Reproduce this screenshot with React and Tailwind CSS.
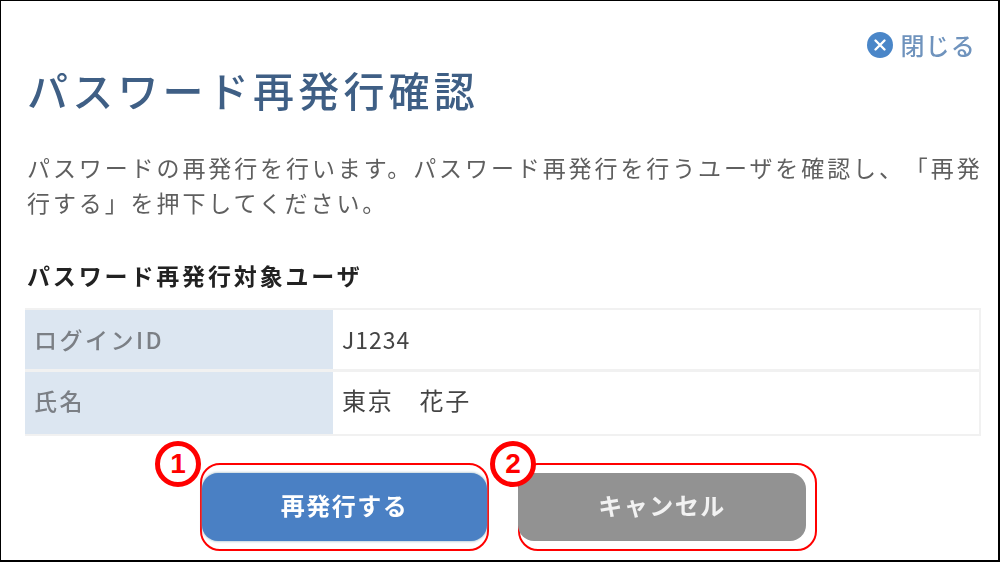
import React from 'react';

const jp = { fontFamily: '"Noto Sans CJK JP", "Noto Sans", sans-serif' };

const rows = [
  { label: 'ログインID', value: 'J1234', rowClass: 'h-[62px] border-b-[3px] border-[#f1f1f1]', valueClass: 'text-[23px] tracking-[1px]', pad: '' },
  { label: '氏名', value: '東京　花子', rowClass: 'h-[62px]', valueClass: 'text-[24px] tracking-[1.8px]', pad: 'pb-[6px]' },
];

const Badge = ({ n, className }) => (
  <div className={`absolute -top-[24px] w-[46px] h-[46px] rounded-full border-[5px] border-[#ff0000] bg-white flex items-center justify-center text-[28px] font-bold text-[#ff0000] leading-none ${className}`} style={{ fontFamily: '"Liberation Sans", sans-serif' }}>
    {n}
  </div>
);

const App = () => {
  return (
    <div className="w-[1000px] h-[562px] bg-white border-t border-l border-r-2 border-b-2 border-black overflow-hidden text-[#555]" style={jp}>
      {/* 閉じる */}
      <div className="flex justify-end items-center gap-[7px] pt-[29px] pr-[22px] h-[59px]">
        <svg width="26" height="26" viewBox="0 0 26 26" className="blur-[0.4px]">
          <circle cx="13" cy="13" r="13" fill="#4a86c8" />
          <path d="M8.5 8.5l9 9M17.5 8.5l-9 9" stroke="#fff" strokeWidth="2.4" strokeLinecap="round" />
        </svg>
        <span className="text-[24px] tracking-[1.2px] leading-none text-[#6f93bd] font-medium blur-[0.5px]">閉じる</span>
      </div>

      <div className="pl-[26px]">
        <h1 className="text-[41px] leading-[60px] tracking-[4.2px] font-medium text-[#3f5f85] -mt-[1px] whitespace-nowrap blur-[0.5px]">パスワード再発行確認</h1>

        <p className="text-[23px] leading-[35px] tracking-[2.9px] text-[#5f5f5f] mt-[31px] w-[970px] [text-spacing-trim:space-all] blur-[0.5px]">
          パスワードの再発行を行います。パスワード再発行を行うユーザを確認し、「再発行する」を押下してください。
        </p>

        <h2 className="text-[23px] leading-[30px] tracking-[2.85px] font-bold text-[#222] mt-[40px] blur-[0.4px]">パスワード再発行対象ユーザ</h2>

        <div className="mt-[18px] -ml-[2px] w-[956px] border-t-2 border-r-2 border-b-2 border-[#f1f1f1]">
          {rows.map((row) => (
            <div key={row.label} className={`flex ${row.rowClass}`}>
              <div className={`w-[308px] bg-[#dce6f1] flex items-center pl-[9px] text-[23px] tracking-[2.5px] font-medium text-[#7b7f85] ${row.pad}`}>
                <span className="blur-[0.5px]">{row.label}</span>
              </div>
              <div className={`flex-1 flex items-center pl-[9px] text-[#444] ${row.valueClass} ${row.pad}`}>
                <span className="blur-[0.5px]">{row.value}</span>
              </div>
            </div>
          ))}
        </div>

        <div className="flex mt-[27px] ml-[173px]">
          <div className="relative w-[289px] h-[88px] border-2 border-[#ff0000] rounded-[20px] pt-[8px]">
            <Badge n="1" className="-left-[47px]" />
            <button className="w-[285px] h-[68px] pb-[4px] rounded-[16px] bg-[#4a80c4] text-white text-[24px] font-bold tracking-[1.5px] shadow-[0_0_3px_#8ab]">
              <span className="blur-[0.5px]">再発行する</span>
            </button>
          </div>
          <div className="relative w-[299px] h-[88px] ml-[29px] border-2 border-[#ff0000] rounded-[20px] pt-[8px]">
            <Badge n="2" className="-left-[30px]" />
            <button className="-ml-[2px] w-[288px] h-[68px] pb-[4px] rounded-[16px] bg-[#929292] text-[#f2f2f2] text-[24px] font-bold tracking-[1.5px]">
              <span className="blur-[0.5px]">キャンセル</span>
            </button>
          </div>
        </div>
      </div>
    </div>
  );
};

export default App;
